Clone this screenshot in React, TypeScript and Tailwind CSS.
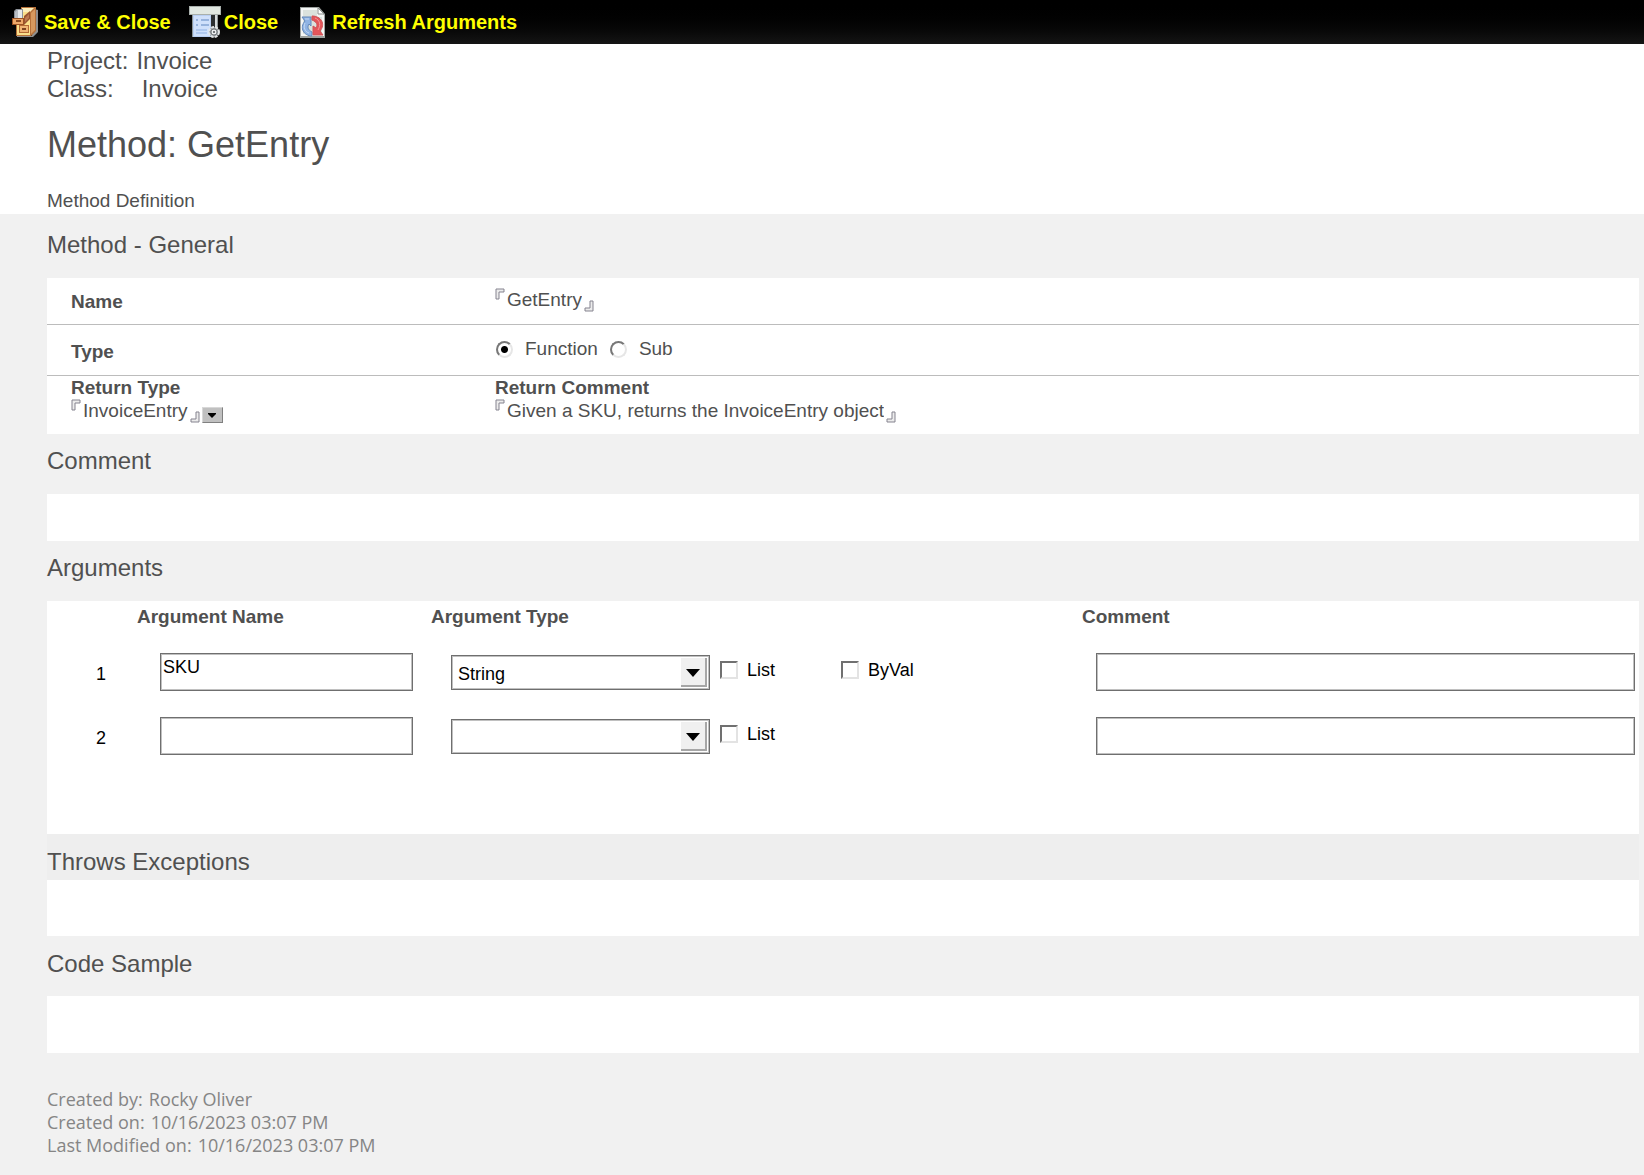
import React from 'react';

const ARGUMENT_TYPES = ['String', 'Integer', 'Long', 'Double', 'Boolean', 'Variant'];

const ARGUMENTS = [
  { id: 1, name: 'SKU', type: 'String', hasByVal: true },
  { id: 2, name: '', type: '', hasByVal: false },
];

const AUDIT_LINES = [
  { label: 'Created by:', value: 'Rocky Oliver' },
  { label: 'Created on:', value: '10/16/2023 03:07 PM' },
  { label: 'Last Modified on:', value: '10/16/2023 03:07 PM' },
];

const IconCabinet: React.FC = () => (
  <svg className="w-[26px] h-[30px] shrink-0" viewBox="0 0 26 30" aria-hidden="true">
    <path d="M22 2 L26 3 V25 L21 30 H5 V29 H20 Z" fill="#8f8f8f" />
    <path d="M9 0 H24 V24 L19 29 H4 V11 L9 6 Z" fill="#b5713a" />
    <path d="M10 1 H22 L18 5 H10 Z" fill="#fbeebc" />
    <path d="M19 6 L23 2 V23 L19 27 Z" fill="#d6995f" />
    <path d="M11 5 H18 V28 H5 V17 L11 11 Z" fill="#fbe08c" />
    <path d="M7 18 H17 V26 H7 Z" fill="#b46a34" />
    <path d="M8 19 H16 V25 H8 Z" fill="#f0b474" />
    <path d="M10 21 H14 V23 H10 Z" fill="#7d4420" />
    <path d="M12 9 L18 4 V12 L12 18 Z" fill="#9a5432" />
    <path d="M13 11 L17 7 V11 L13 15 Z" fill="#bd7a50" />
    <path d="M2 4 L4 2 H11 V12 H2 Z" fill="#8d9299" />
    <path d="M3 5 L5 3 H6 V11 H3 Z" fill="#b9bec4" />
    <path d="M6 3 H10 V11 H6 Z" fill="#e6e9ec" />
    <path d="M0 11 H12 V18 H0 Z" fill="#9c5324" />
    <path d="M1 12 H11 V17 H1 Z" fill="#eea869" />
    <path d="M4 13 H9 V15 H4 Z" fill="#8a4a20" />
  </svg>
);

const IconScroll: React.FC = () => (
  <svg className="w-8 h-8 shrink-0" viewBox="0 0 32 32" aria-hidden="true">
    <path d="M3 9 H29 V25 H27 V31 H3 Z" fill="#8f9799" />
    <path d="M4 9 H22 V31 H4 Z" fill="#b9d0f4" />
    <path d="M5 10 H21 V30 H5 Z" fill="#cfe0fb" />
    <path d="M22 9 H28 V22 H22 Z" fill="#2b2f31" />
    <path d="M26 9 H28 V24 H26 Z" fill="#d5dadb" />
    <path d="M7 14 H9 M12 14 H20 M7 19 H9 M12 19 H20" stroke="#5f86bf" strokeWidth="1" />
    <path d="M7 24 H18 M7 27 H18" stroke="#8fb1e2" strokeWidth="1" />
    <path d="M0 0 H32 V9 H0 Z" fill="#a9b0ac" />
    <path d="M1 1 H31 V8 H1 Z" fill="#e1e8e2" />
    <circle cx="25" cy="26" r="5" fill="#8c9194" />
    <circle cx="25" cy="26" r="5" fill="none" stroke="#e3e6e7" strokeWidth="2" strokeDasharray="3 1" />
    <circle cx="25" cy="26" r="3" fill="#eceeef" stroke="#777c80" strokeWidth="1" />
    <circle cx="25" cy="26" r="1" fill="#4c5155" />
  </svg>
);

const IconRefreshPage: React.FC = () => (
  <svg className="w-[26px] h-[31px] shrink-0" viewBox="0 0 26 31" aria-hidden="true">
    <path d="M0 0 H19 L25 7 V31 H0 Z" fill="#9da2a0" />
    <path d="M1 1 H18 L24 8 V29 H1 Z" fill="#f4f6f5" />
    <path d="M3 3 H17 V10 H22 V27 H3 Z" fill="#dbe2dd" />
    <path d="M18 1 V7 H24 Z" fill="#ffffff" stroke="#8c918f" strokeWidth="1" />
    <path d="M2 10 H11 V19 L9 17 C7 20 8 23 12 25 V29 C4 29 -1 21 5 14 Z" fill="#8fb3e3" stroke="#6287b9" strokeWidth="1" />
    <path d="M5 12 H9 M5 16 C3 20 5 25 9 26" fill="none" stroke="#c6dbf5" strokeWidth="1" />
    <path d="M23 28 H13 V19 L16 21 C18 18 17 15 12 13 V9 C21 9 26 17 20 24 Z" fill="#e4555a" stroke="#cf5257" strokeWidth="1" />
    <path d="M15 11 C20 13 21 18 18 23" fill="none" stroke="#f39a9c" strokeWidth="1" />
  </svg>
);

const ToolbarButton: React.FC<{ icon: React.ReactNode; className?: string; children: React.ReactNode }> = ({ icon, className = '', children }) => (
  <button type="button" className={`flex items-center text-xl leading-6 font-bold text-[#ffff00] whitespace-nowrap ${className}`}>
    {icon}
    <span>{children}</span>
  </button>
);

const CornerMark: React.FC<{ end?: boolean }> = ({ end = false }) => (
  <svg className={`w-[10px] h-3 shrink-0 ${end ? 'self-end rotate-180' : 'self-start'}`} viewBox="0 0 10 12" aria-hidden="true">
    <path d="M1 11 V1 H9 V4 H4 V11 Z" fill="#ececec" stroke="#85838f" strokeWidth="1" />
  </svg>
);

// Text field wrapped in the small corner brackets
const BracketField: React.FC<{ id: string; value: string }> = ({ id, value }) => (
  <div className="flex h-6 items-center">
    <CornerMark />
    <input
      id={id}
      type="text"
      defaultValue={value}
      className="ml-0.5 mr-0.5 h-6 bg-transparent p-0 leading-6 outline-none [field-sizing:content]"
    />
    <CornerMark end />
  </div>
);

const SectionTitle: React.FC<{ children: React.ReactNode; className?: string }> = ({ children, className = 'pt-[13px] pb-[19px]' }) => (
  <h2 className={`text-2xl leading-7 ${className}`}>{children}</h2>
);

const Radio: React.FC<{ label: string; checked?: boolean }> = ({ label, checked = false }) => (
  <label className="flex items-center gap-3">
    <input
      type="radio"
      name="methodType"
      defaultChecked={checked}
      className="size-[17px] appearance-none rounded-full border-2 border-t-[#777777] border-l-[#777777] border-r-[#e6e6e6] border-b-[#e6e6e6] checked:bg-[radial-gradient(circle,#000_3px,transparent_4px)]"
    />
    {label}
  </label>
);

const Checkbox: React.FC<{ label: string }> = ({ label }) => (
  <label className="flex items-center gap-[9px]">
    <input
      type="checkbox"
      className="size-[18px] appearance-none border-2 border-t-[#707070] border-l-[#707070] border-r-[#e3e3e3] border-b-[#e3e3e3] checked:bg-black"
    />
    {label}
  </label>
);

const boxClass = 'block w-full border border-[#6f6f6f] bg-white shadow-[inset_0_0_0_1px_#c0c0c0] outline-none';

const TypeSelect: React.FC<{ label: string; value: string }> = ({ label, value }) => (
  <div className="relative w-[259px]">
    <select aria-label={label} defaultValue={value} className={`${boxClass} h-[35px] appearance-none pl-[6px] pt-0.5`}>
      <option value=""></option>
      {ARGUMENT_TYPES.map((type) => (
        <option key={type} value={type}>{type}</option>
      ))}
    </select>
    <span className="pointer-events-none absolute top-[3px] right-[3px] flex h-[29px] w-[26px] items-center justify-center border-r-2 border-b-2 border-[#a6a6a6] bg-[#f0f0f0]">
      <svg className="mt-0.5 w-[14px] h-2" viewBox="0 0 14 8" aria-hidden="true">
        <path d="M0 0 H14 L7 8 Z" fill="#000000" />
      </svg>
    </span>
  </div>
);

const App: React.FC = () => {
  return (
    <div className="min-h-screen bg-[#f1f1f1] font-['Liberation_Sans',Arial,sans-serif] text-[19px] leading-6 text-[#505050]">
      {/* Toolbar */}
      <nav className="flex h-11 items-center bg-linear-to-b from-black to-[#151515] pl-3">
        <ToolbarButton icon={<IconCabinet />} className="gap-[6px]">Save &amp; Close</ToolbarButton>
        <ToolbarButton icon={<IconScroll />} className="ml-[18px] gap-[3px]">Close</ToolbarButton>
        <ToolbarButton icon={<IconRefreshPage />} className="ml-[22px] gap-[6px]">Refresh Arguments</ToolbarButton>
      </nav>

      {/* Document heading */}
      <header className="bg-white pt-[3px] pl-[47px] pb-px">
        <div className="text-2xl leading-7">
          <p className="flex gap-2"><span>Project:</span><span>Invoice</span></p>
          <p className="flex gap-7"><span>Class:</span><span>Invoice</span></p>
        </div>
        <h1 className="mt-[22px] text-4xl leading-10">Method: GetEntry</h1>
        <p className="mt-6">Method Definition</p>
      </header>

      <main className="pl-[47px] pr-[5px]">
        {/* General */}
        <section>
          <SectionTitle className="pt-[17px] pb-[19px]">Method - General</SectionTitle>
          <div className="bg-white">
            <div className="grid h-[47px] grid-cols-[424px_1fr] border-b border-[#bcbcbc] pl-6">
              <label htmlFor="methodName" className="pt-3 font-bold">Name</label>
              <div className="pt-[10px]"><BracketField id="methodName" value="GetEntry" /></div>
            </div>
            <div className="grid h-[51px] grid-cols-[424px_1fr] border-b border-[#bcbcbc] pl-6">
              <span className="pt-[15px] font-bold">Type</span>
              <div role="radiogroup" aria-label="Type" className="flex items-start gap-3 pt-3 pl-px">
                <Radio label="Function" checked />
                <Radio label="Sub" />
              </div>
            </div>
            <div className="grid h-[58px] grid-cols-[424px_1fr] pt-px pl-6">
              <div>
                <label htmlFor="returnType" className="block leading-[22px] font-bold">Return Type</label>
                <div className="flex items-end">
                  <BracketField id="returnType" value="InvoiceEntry" />
                  <button
                    type="button"
                    aria-label="Choose return type"
                    className="ml-0.5 flex h-4 w-[21px] items-center justify-center border border-t-[#d8d8d8] border-l-[#d8d8d8] border-r-[#808080] border-b-[#808080] bg-[#c0c0c0]"
                  >
                    <svg className="w-2 h-[5px]" viewBox="0 0 8 5" aria-hidden="true">
                      <path d="M0 0 H8 V1 L4 5 L0 1 Z" fill="#000000" />
                    </svg>
                  </button>
                </div>
              </div>
              <div>
                <label htmlFor="returnComment" className="block leading-[22px] font-bold">Return Comment</label>
                <BracketField id="returnComment" value="Given a SKU, returns the InvoiceEntry object" />
              </div>
            </div>
          </div>
        </section>

        {/* Comment */}
        <section>
          <SectionTitle>Comment</SectionTitle>
          <div className="h-[47px] bg-white" />
        </section>

        {/* Arguments */}
        <section>
          <SectionTitle>Arguments</SectionTitle>
          <div className="bg-white pb-[65px]">
            <table className="w-full table-fixed border-collapse text-left">
              <colgroup>
                <col className="w-[90px]" />
                <col className="w-[294px]" />
                <col className="w-[289px]" />
                <col className="w-[121px]" />
                <col className="w-[241px]" />
                <col />
              </colgroup>
              <thead>
                <tr className="h-10 align-top">
                  <th className="p-0"></th>
                  <th className="p-0 pt-1">Argument Name</th>
                  <th colSpan={3} className="p-0 pt-1">Argument Type</th>
                  <th className="p-0 pt-1">Comment</th>
                </tr>
              </thead>
              <tbody className="text-lg leading-6 text-black">
                {ARGUMENTS.map((arg) => (
                  <tr key={arg.id} className="h-16 align-top">
                    <td className="p-0 pt-[21px] pl-[49px]">{arg.id}</td>
                    <td className="p-0 pt-3 pl-[23px] pr-[18px]">
                      <input
                        type="text"
                        aria-label={`Argument ${arg.id} name`}
                        defaultValue={arg.name}
                        className={`${boxClass} h-[38px] px-0.5 pb-[9px]`}
                      />
                    </td>
                    <td className="p-0 pt-[14px] pl-5">
                      <TypeSelect label={`Argument ${arg.id} type`} value={arg.type} />
                    </td>
                    <td className="p-0 pt-[17px]"><Checkbox label="List" /></td>
                    <td className="p-0 pt-[17px]">{arg.hasByVal && <Checkbox label="ByVal" />}</td>
                    <td className="p-0 pt-3 pl-[14px] pr-1">
                      <input
                        type="text"
                        aria-label={`Argument ${arg.id} comment`}
                        className={`${boxClass} h-[38px] px-0.5 pb-[9px]`}
                      />
                    </td>
                  </tr>
                ))}
              </tbody>
            </table>
          </div>
        </section>

        {/* Throws Exceptions */}
        <section>
          <SectionTitle className="bg-[#eeeeee] pt-[14px] pb-1">Throws Exceptions</SectionTitle>
          <div className="h-14 bg-white" />
        </section>

        {/* Code Sample */}
        <section>
          <SectionTitle className="pt-[14px] pb-[18px]">Code Sample</SectionTitle>
          <div className="h-[57px] bg-white" />
        </section>
      </main>

      {/* Audit trail */}
      <footer className="mt-[35px] pb-3 pl-[47px] font-['Open_Sans',sans-serif] text-lg leading-[23px] text-[#858585]">
        {AUDIT_LINES.map((line) => (
          <p key={line.label} className="flex gap-[6px]"><span>{line.label}</span><span>{line.value}</span></p>
        ))}
      </footer>
    </div>
  );
};

export default App;
